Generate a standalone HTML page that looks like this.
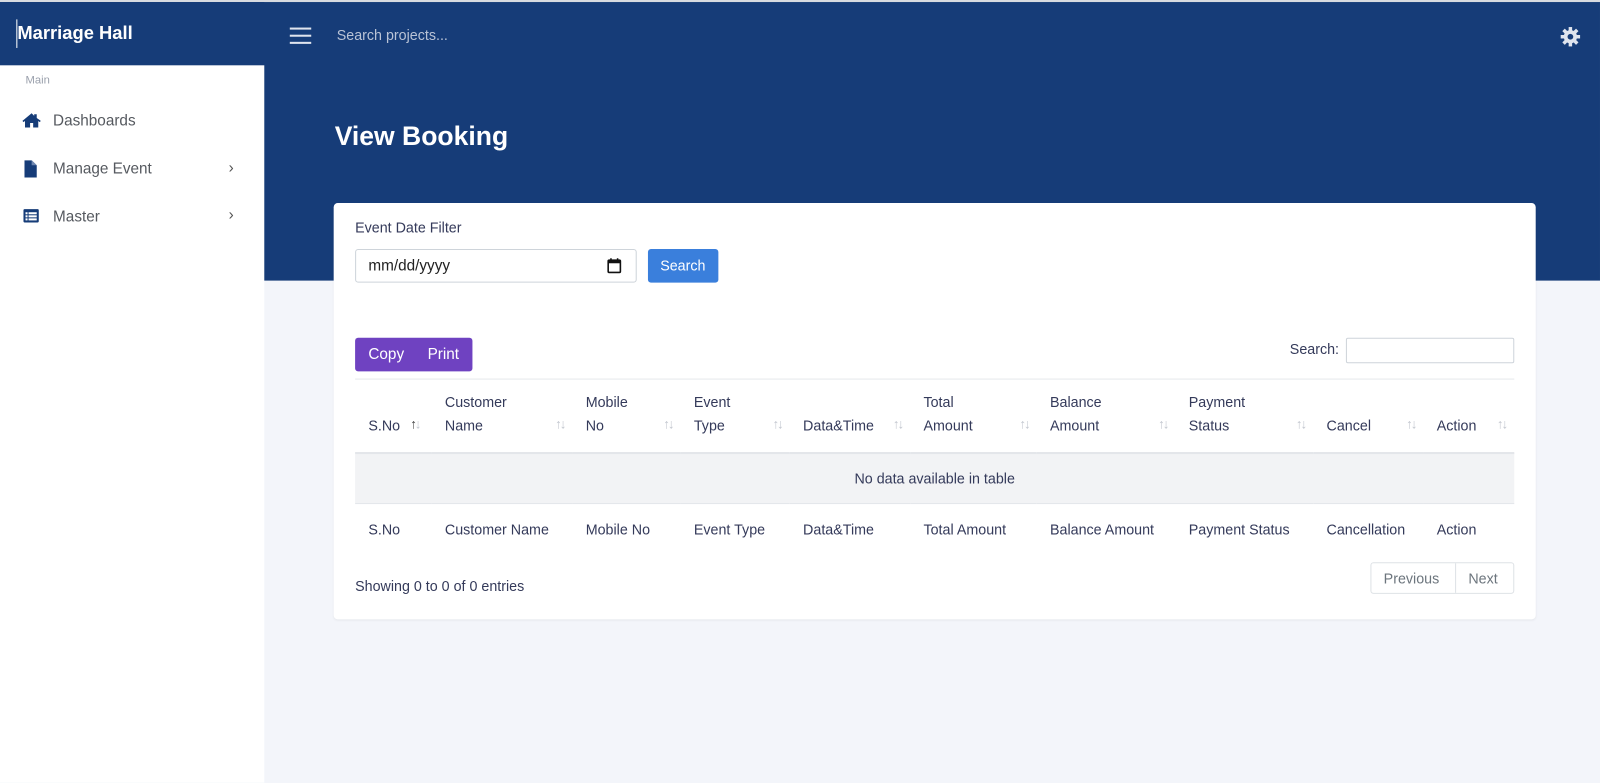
<!DOCTYPE html>
<html><head><meta charset="utf-8"><style>
*{box-sizing:border-box;margin:0;padding:0}
html,body{width:1600px;height:767px;overflow:hidden;background:#f3f5fa}
#w{position:absolute;left:0;top:0;width:1568px;height:752px;transform:scale(1.0204);transform-origin:0 0;font-family:"Liberation Sans",sans-serif;color:#343a5a}
.topline{position:absolute;left:0;top:0;width:1568px;height:2px;background:#d8dbe0}
.hdr{position:absolute;left:0;top:2px;width:1568px;height:273px;background:#163c78}
.brand{position:absolute;left:0;top:2px;width:259px;height:62px;background:#163c78;color:#fff;font-size:18px;font-weight:bold;padding:20px 0 0 17px}
.caret{position:absolute;left:16px;top:19px;width:1px;height:28px;background:#fff}
.side{position:absolute;left:0;top:64px;width:259px;height:703px;background:#fff}
.side .main{position:absolute;left:25px;top:9px;font-size:11px;color:#9aa0ac}
.item{position:absolute;left:22px;font-size:15px;color:#55595f}
.item span{position:absolute;left:30px;top:0;white-space:nowrap}
.chev{position:absolute;left:224px;font-size:15px;color:#555}
.ham{position:absolute;left:284px;top:27px;width:21px}
.ham i{display:block;height:2px;background:#dfe4ee;margin-bottom:5px}
.sp{position:absolute;left:330px;top:26px;color:#b9c3d6;font-size:14px}
h1{position:absolute;left:328px;top:118px;color:#fff;font-size:26px;font-weight:bold}
.card{position:absolute;left:327px;top:199px;width:1178px;height:408px;background:#fff;border-radius:4px;box-shadow:0 1px 2px rgba(0,0,0,.06)}
.abs{position:absolute}
table{position:absolute;left:21px;top:172px;border-collapse:collapse;table-layout:fixed;width:1136px;font-size:14px;color:#343a5a}
th{font-weight:normal;text-align:left;padding-left:13px;position:relative;vertical-align:bottom}
.arr{position:absolute;right:8px;bottom:16px;color:#c4c8d0;font-size:13px;letter-spacing:-2px}
</style></head><body><div id="w">
<div class="topline"></div>
<div class="hdr"></div>
<div class="brand">Marriage Hall</div><div class="caret"></div>
<div class="side">
<div class="main">Main</div>
<div class="item" style="top:46px"><svg width="18" height="16" viewBox="0 0 18 16"><path d="M9 1L0 8.5l1 1.2L2.5 8.6V15h5v-4.5h3V15h5V8.6l1.5 1.1 1-1.2L14 5.6V2h-2.5v1.6z" fill="#163c78"/></svg><span>Dashboards</span></div>
<div class="item" style="top:93px"><svg width="16" height="17" viewBox="0 0 16 17"><path d="M2 0h7l5 5v12H2z" fill="#163c78"/><path d="M9 0v5h5" fill="#6d86b0"/></svg><span>Manage Event</span></div>
<div class="chev" style="top:92px">›</div>
<div class="item" style="top:140px"><svg width="17" height="15" viewBox="0 0 17 15"><rect x="1" y="1" width="15" height="13" rx="1" fill="#163c78"/><g fill="#fff"><rect x="3" y="4" width="2" height="2"/><rect x="3" y="7" width="2" height="2"/><rect x="3" y="10" width="2" height="2"/><rect x="6" y="4" width="8" height="2"/><rect x="6" y="7" width="8" height="2"/><rect x="6" y="10" width="8" height="2"/></g></svg><span>Master</span></div>
<div class="chev" style="top:138px">›</div>
</div>
<div class="ham"><i></i><i></i><i></i></div>
<div class="sp">Search projects...</div>
<svg class="abs" style="left:1529px;top:26px" width="20" height="20" viewBox="0 0 20 20"><g fill="#dfe4ee"><circle cx="10" cy="10" r="6.5"/><g id="t"><rect x="8.3" y="0.5" width="3.4" height="4"/><rect x="8.3" y="15.5" width="3.4" height="4"/></g><use href="#t" transform="rotate(45 10 10)"/><use href="#t" transform="rotate(90 10 10)"/><use href="#t" transform="rotate(135 10 10)"/></g><circle cx="10" cy="10" r="2.8" fill="#163c78"/></svg>
<h1>View Booking</h1>
<div class="card">
<div class="abs" style="left:21px;top:16px;font-size:14px">Event Date Filter</div>
<div class="abs" style="left:21px;top:45px;width:276px;height:33px;border:1px solid #ced4da;border-radius:3px;font-size:15px;padding:7px 0 0 12px;color:#222">mm/dd/yyyy
<svg class="abs" style="left:246px;top:8px" width="14" height="15" viewBox="0 0 14 15"><rect x="1" y="2" width="12" height="12" rx="1" fill="none" stroke="#111" stroke-width="1.6"/><rect x="1" y="2" width="12" height="3" fill="#111"/><rect x="3" y="0" width="1.5" height="3" fill="#111"/><rect x="9.5" y="0" width="1.5" height="3" fill="#111"/></svg></div>
<div class="abs" style="left:308px;top:45px;width:69px;height:33px;background:#3a7fdc;border-radius:3px;color:#fff;font-size:14px;padding:8px 0 0 12px">Search</div>
<div class="abs" style="left:21px;top:132px;width:115px;height:33px;background:#6f42c1;border-radius:3px;color:#fff;font-size:15px;padding:8px 0 0 13px">Copy<span style="margin-left:23px">Print</span></div>
<div class="abs" style="left:937px;top:135px;font-size:14px">Search:</div>
<div class="abs" style="left:992px;top:132px;width:165px;height:25px;border:1px solid #ced4da;border-radius:2px"></div>
<div class="abs" style="left:21px;top:172px;width:1136px;height:1px;background:#e6e8ec"></div>
<table>
<colgroup><col style="width:75px"><col style="width:138px"><col style="width:106px"><col style="width:107px"><col style="width:118px"><col style="width:124px"><col style="width:136px"><col style="width:135px"><col style="width:108px"><col style="width:89px"></colgroup>
<tr style="height:73px;border-bottom:2px solid #e3e6ea">
<th style="padding-bottom:14px;line-height:23px">S.No<span class="arr" style="right:12px"><b style="color:#444;font-weight:normal">↑</b>↓</span></th>
<th style="padding-bottom:14px;line-height:23px">Customer<br>Name<span class="arr">↑↓</span></th>
<th style="padding-bottom:14px;line-height:23px">Mobile<br>No<span class="arr">↑↓</span></th>
<th style="padding-bottom:14px;line-height:23px">Event<br>Type<span class="arr">↑↓</span></th>
<th style="padding-bottom:14px;line-height:23px">Data&amp;Time<span class="arr">↑↓</span></th>
<th style="padding-bottom:14px;line-height:23px">Total<br>Amount<span class="arr">↑↓</span></th>
<th style="padding-bottom:14px;line-height:23px">Balance<br>Amount<span class="arr">↑↓</span></th>
<th style="padding-bottom:14px;line-height:23px">Payment<br>Status<span class="arr">↑↓</span></th>
<th style="padding-bottom:14px;line-height:23px">Cancel<span class="arr">↑↓</span></th>
<th style="padding-bottom:14px;line-height:23px">Action<span class="arr">↑↓</span></th>
</tr>
<tr style="height:49px;background:#f2f3f5;border-bottom:1px solid #e3e6ea"><td colspan="10" style="text-align:center">No data available in table</td></tr>
<tr style="height:51px"><th style="vertical-align:middle">S.No</th><th style="vertical-align:middle">Customer Name</th><th style="vertical-align:middle">Mobile No</th><th style="vertical-align:middle">Event Type</th><th style="vertical-align:middle">Data&amp;Time</th><th style="vertical-align:middle">Total Amount</th><th style="vertical-align:middle">Balance Amount</th><th style="vertical-align:middle">Payment Status</th><th style="vertical-align:middle">Cancellation</th><th style="vertical-align:middle">Action</th></tr>
</table>
<div class="abs" style="left:21px;top:367px;font-size:14px">Showing 0 to 0 of 0 entries</div>
<div class="abs" style="left:1016px;top:352px;width:141px;height:31px;border:1px solid #dee2e6;border-radius:3px;font-size:14px;color:#6c757d">
<span class="abs" style="left:12px;top:7px">Previous</span><span class="abs" style="left:82px;top:0;width:1px;height:29px;background:#dee2e6"></span><span class="abs" style="left:95px;top:7px">Next</span></div>
</div>
</div></body></html>
